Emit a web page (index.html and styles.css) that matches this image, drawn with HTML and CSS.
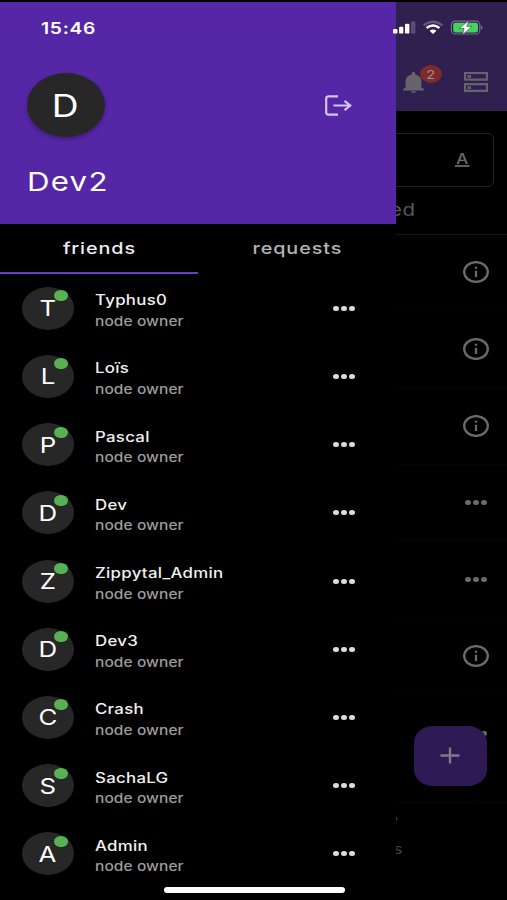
FILE: index.html
```html
<!DOCTYPE html>
<html lang="en">
<head>
<meta charset="utf-8">
<title>Friends</title>
<link rel="stylesheet" href="styles.css">
</head>
<body>
<div class="screen">
  <main class="app">
    <header class="app-bar">
      <div class="bell">
        <svg width="21" height="21" viewBox="0 0 21 21" fill="#66636c"><path d="M0 18.500v-1.200l2.600-2V9.200C2.600 5.800 5 3.200 8.800 2.400V1.500C8.800.6 9.500 0 10.500 0s1.700.6 1.700 1.500v.9C16 3.200 18.400 5.800 18.400 9.200v6.100l2.600 2v1.200zM8 19.300h5c0 1-1.100 1.700-2.500 1.700S8 20.300 8 19.300z"/></svg>
        <span class="badge"><span class="t">2</span></span>
      </div>
      <svg class="servers" width="24" height="20" viewBox="0 0 24 20" fill="none" stroke="#66636c" stroke-width="2.200"><path d="M1 1h22v6.700H1zM1 12.200h22v6.700H1z"/><path d="M3.500 4.400h3.500M3.500 15.600h3.500" stroke-width="2.600"/></svg>
    </header>
    <div class="search"><span class="t">A</span></div>
    <div class="sort"><span class="t">ed</span></div>
    <ul class="files">
      <li><svg class="info" viewBox="0 0 26 22"><ellipse cx="13" cy="11" rx="11.800" ry="9.900"/><path d="M13 9.800v6.200M13 5.800v2"/></svg></li>
      <li><svg class="info" viewBox="0 0 26 22"><ellipse cx="13" cy="11" rx="11.800" ry="9.900"/><path d="M13 9.800v6.200M13 5.800v2"/></svg></li>
      <li><svg class="info" viewBox="0 0 26 22"><ellipse cx="13" cy="11" rx="11.800" ry="9.900"/><path d="M13 9.800v6.200M13 5.800v2"/></svg></li>
      <li><span class="dots"><i></i><i></i><i></i></span></li>
      <li><span class="dots"><i></i><i></i><i></i></span></li>
      <li><svg class="info" viewBox="0 0 26 22"><ellipse cx="13" cy="11" rx="11.800" ry="9.900"/><path d="M13 9.800v6.200M13 5.800v2"/></svg></li>
      <li><span class="dots"><i></i><i></i><i></i></span></li>
      <li class="last"><span class="t">'</span><span class="t">s</span></li>
    </ul>
    <button class="fab" aria-label="Add"><svg width="20" height="17" viewBox="0 0 20 17" stroke="#817889" stroke-width="2.400"><path d="M.5 8.500h19M10 .5v16"/></svg></button>
  </main>

  <aside class="drawer">
    <header class="profile">
      <div class="profile-row">
        <div class="avatar large"><span class="t">D</span></div>
        <svg class="logout" width="27" height="21" viewBox="0 0 27 21" fill="none" stroke="#d3c6ea" stroke-width="2.200"><path d="M13 1.400H3.500Q1.200 1.400 1.200 3.400v14.200q0 2 2.300 2H13M8.500 10.500h16.500M19.500 5.800l5.800 4.700-5.800 4.700"/></svg>
      </div>
      <h1><span class="t">Dev2</span></h1>
    </header>
    <nav class="tabs">
      <a class="on"><span class="t">friends</span></a>
      <a><span class="t">requests</span></a>
    </nav>
    <ul class="friends">
      <li><div class="avatar"><span class="t">T</span><b></b></div><div class="who"><strong><span class="t">Typhus0</span></strong><small><span class="t">node owner</span></small></div><span class="dots"><i></i><i></i><i></i></span></li>
      <li><div class="avatar"><span class="t">L</span><b></b></div><div class="who"><strong><span class="t">Loïs</span></strong><small><span class="t">node owner</span></small></div><span class="dots"><i></i><i></i><i></i></span></li>
      <li><div class="avatar"><span class="t">P</span><b></b></div><div class="who"><strong><span class="t">Pascal</span></strong><small><span class="t">node owner</span></small></div><span class="dots"><i></i><i></i><i></i></span></li>
      <li><div class="avatar"><span class="t">D</span><b></b></div><div class="who"><strong><span class="t">Dev</span></strong><small><span class="t">node owner</span></small></div><span class="dots"><i></i><i></i><i></i></span></li>
      <li><div class="avatar"><span class="t">Z</span><b></b></div><div class="who"><strong><span class="t">Zippytal_Admin</span></strong><small><span class="t">node owner</span></small></div><span class="dots"><i></i><i></i><i></i></span></li>
      <li><div class="avatar"><span class="t">D</span><b></b></div><div class="who"><strong><span class="t">Dev3</span></strong><small><span class="t">node owner</span></small></div><span class="dots"><i></i><i></i><i></i></span></li>
      <li><div class="avatar"><span class="t">C</span><b></b></div><div class="who"><strong><span class="t">Crash</span></strong><small><span class="t">node owner</span></small></div><span class="dots"><i></i><i></i><i></i></span></li>
      <li><div class="avatar"><span class="t">S</span><b></b></div><div class="who"><strong><span class="t">SachaLG</span></strong><small><span class="t">node owner</span></small></div><span class="dots"><i></i><i></i><i></i></span></li>
      <li><div class="avatar"><span class="t">A</span><b></b></div><div class="who"><strong><span class="t">Admin</span></strong><small><span class="t">node owner</span></small></div><span class="dots"><i></i><i></i><i></i></span></li>
    </ul>
  </aside>

  <div class="status">
    <span class="t clock">15:46</span>
    <svg width="92" height="16" viewBox="0 0 92 16">
      <g fill="#fff"><rect x="0" y="9" width="4.500" height="4.600" rx="1.200"/><rect x="6.100" y="6.700" width="4.300" height="6.900" rx="1.200"/><rect x="12" y="3.800" width="4.400" height="9.800" rx="1.200"/><rect x="18" y="1.200" width="4.400" height="12.400" rx="1.200" opacity=".2"/></g>
      <g fill="none" stroke="#fff" stroke-width="2.400"><path d="M30.600 5.300Q40 -1.800 49.400 5.300" opacity=".25"/><path d="M33.600 8Q40 3 46.400 8"/></g><path d="M36.600 10.700Q40 8.200 43.400 10.700L40 13.900z" fill="#fff"/>
      <rect x="58.400" y="1.200" width="28.400" height="12.800" rx="3.800" fill="none" stroke="#756b8b" stroke-width="1.200"/><rect x="60.200" y="2.800" width="24.800" height="9.600" rx="2.300" fill="#43d45c"/><path d="M88.200 5.600q2.600 2 0 4z" fill="#8d84a0"/>
      <path d="M75.600.5L66.400 8.500h4.700l-1.600 6.300L78.800 6.400h-5z" fill="#fff" stroke="#302050" stroke-width=".5"/>
    </svg>
  </div>
  <div class="home"></div>
</div>
</body>
</html>
```
FILE: styles.css
```css
* { box-sizing: border-box; margin: 0; padding: 0; }
body { background: #000; font-family: Inter, "Liberation Sans", sans-serif; color: #fff; }
ul { list-style: none; }
.screen { position: relative; width: 507px; height: 900px; overflow: hidden; background: #000; }
/* Wide letterforms */
.t { display: inline-block; transform: scaleX(1.2); transform-origin: 0 50%; white-space: nowrap; }

.app { padding-top: 2px; }
.app-bar { height: 109px; background: #302050; display: flex; justify-content: flex-end; align-items: flex-start; gap: 40px; padding: 70px 19px 0 0; }
.bell { position: relative; width: 21px; height: 21px; }
.bell svg { display: block; }
.badge { position: absolute; left: 17px; top: -7px; width: 22px; height: 18px; border-radius: 50%; background: #7b2b2c; color: #a38a93; font-size: 12px; display: flex; align-items: center; justify-content: center; }
.badge .t, .avatar .t, .tabs .t { transform-origin: 50% 50%; }
.search { height: 54px; margin: 21.500px 13px 0 200px; border: 1.500px solid #242424; border-radius: 6px; display: flex; justify-content: flex-end; padding: 18px 26px 0 0; }
.search .t { height: 15px; padding: 0 1px; font-size: 14px; line-height: 14px; font-weight: 500; color: #6c6c6c; border-bottom: 2px solid #5f5f5f; }
.sort { height: 48px; padding: 13px 95px 0 0; text-align: right; font-size: 17px; line-height: 20px; color: #5c5c5c; letter-spacing: .6px; border-bottom: 1px solid #131313; }
.files li { height: 76.700px; display: flex; align-items: center; justify-content: flex-end; padding-right: 18px; border-bottom: 1px solid #050505; }
.files .dots { margin-right: 2.500px; color: #6a6a6a; }
.files .last { flex-direction: column; align-items: flex-start; justify-content: flex-start; padding: 10px 0 0 393.500px; gap: 9px; font-size: 13px; line-height: 18px; color: #444; border: 0; height: 90px; }
.files li:nth-child(7) { height: 108px; align-items: flex-start; padding-top: 36px; }
.info { width: 26px; height: 22px; fill: none; stroke: #6a6a6a; stroke-width: 2.300; }
.dots { display: flex; gap: 2.500px; color: #dcdcdc; }
.dots i { width: 5.500px; height: 5px; border-radius: 50%; background: currentColor; }
.fab { position: absolute; left: 413.500px; top: 726px; width: 73px; height: 59.500px; border: 0; border-radius: 19px / 16px; background: #2e1954; display: flex; align-items: center; justify-content: center; }

.drawer { position: absolute; left: 0; top: 2px; width: 395.500px; height: 898px; background: #000; }
.profile { height: 221.500px; background: #5526a6; padding: 71px 43.500px 0 27px; }
.profile-row { display: flex; justify-content: space-between; align-items: center; height: 64px; }
.profile h1 { margin-top: 28px; font-size: 26px; line-height: 34px; font-weight: 400; letter-spacing: 1.050px; }
.avatar { position: relative; flex: none; width: 52px; height: 43px; border-radius: 50%; background: #272727; display: flex; align-items: center; justify-content: center; font-size: 21.500px; }
.avatar.large { width: 78px; height: 64px; font-size: 31px; box-shadow: 0 2px 4px rgba(0,0,0,.3); }
.avatar.large .t { transform: translateX(-1px) scaleX(1.2); }
.avatar b { position: absolute; left: 32.500px; top: 3.500px; width: 13.500px; height: 11px; border-radius: 50%; background: #58b153; }
.tabs { display: flex; height: 50.700px; }
.tabs a { width: 50%; padding: 13px 0 0 1px; text-align: center; font-size: 16.500px; line-height: 22px; font-weight: 500; letter-spacing: .75px; color: #b4b4b4; }
.tabs .on { color: #ededed; border-bottom: 2.500px solid #6a3bc9; }
.friends li { height: 68.200px; display: flex; align-items: center; padding: 0 41px 0 21.700px; }
.who { flex: 1; padding: 5px 0 0 21px; }
.who strong, .who small { display: block; height: 21.500px; line-height: 21.500px; }
.who strong { font-size: 14px; font-weight: 500; letter-spacing: .25px; color: #f0f0f0; }
.who small { font-size: 12.900px; font-weight: 500; letter-spacing: .08px; color: #9c9c9c; }
.who .t { display: block; width: max-content; }

.status { position: absolute; left: 41px; top: 18px; width: 446px; display: flex; justify-content: space-between; align-items: center; height: 20px; padding-right: 2px; }
.clock { font-size: 16px; font-weight: 600; letter-spacing: .6px; }
.home { position: absolute; left: 164px; top: 886.500px; width: 181px; height: 6px; border-radius: 3px; background: #fff; }
```
